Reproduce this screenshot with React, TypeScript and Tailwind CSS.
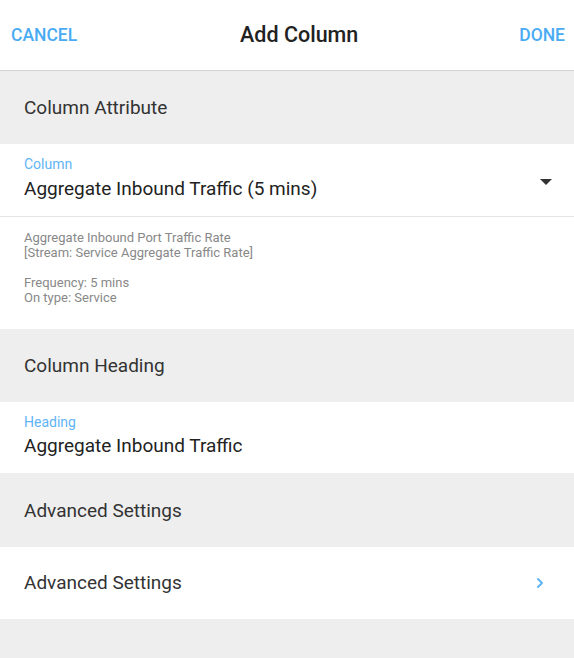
import { ChevronRight } from 'lucide-react';

export default function App() {
  return (
    <div className="w-[574px] h-[658px] bg-[#eeeeee] font-['Roboto',sans-serif] overflow-hidden">
      <div className="h-[71px] bg-white border-b border-[#d4d4d4] flex items-center justify-between pl-[11px] pr-[9px]">
        <button className="text-[17.5px] font-medium text-[#4aabf3]">CANCEL</button>
        <h1 className="text-[21.5px] font-medium text-[#222] ml-[2px]">Add Column</h1>
        <button className="text-[17.5px] font-medium text-[#4aabf3]">DONE</button>
      </div>

      <div className="h-[73px] flex items-center px-6 pt-[2px] text-[19px] text-[#333]">Column Attribute</div>

      <div className="bg-white">
        <div className="h-[73px] border-b border-[#e6e6e6] px-6 pt-[12px] relative">
          <div className="text-[14px] leading-[16px] text-[#5fb4f5]">Column</div>
          <div className="text-[19px] leading-[24px] text-[#222] mt-[5px]">Aggregate Inbound Traffic (5 mins)</div>
          <div className="absolute right-[22px] top-[35px] w-0 h-0 border-l-[6px] border-r-[6px] border-t-[6px] border-l-transparent border-r-transparent border-t-[#333]" />
        </div>
        <div className="h-[112px] px-6 pt-[13px] text-[13px] leading-[15px] text-[#888]">
          <div>Aggregate Inbound Port Traffic Rate</div>
          <div>[Stream: Service Aggregate Traffic Rate]</div>
          <div className="mt-[15px]">Frequency: 5 mins</div>
          <div>On type: Service</div>
        </div>
      </div>

      <div className="h-[73px] flex items-center px-6 pt-[2px] text-[19px] text-[#333]">Column Heading</div>

      <div className="h-[71px] bg-white px-6 pt-[12px]">
        <div className="text-[14px] leading-[16px] text-[#5fb4f5]">Heading</div>
        <div className="text-[19px] leading-[24px] text-[#222] mt-[4px]">Aggregate Inbound Traffic</div>
      </div>

      <div className="h-[74px] flex items-center px-6 pt-[2px] text-[19px] text-[#333]">Advanced Settings</div>

      <div className="h-[72px] bg-white flex items-center justify-between pl-6 pr-[26px] text-[19px] text-[#333]">
        <span>Advanced Settings</span>
        <ChevronRight size={16} strokeWidth={3} className="text-[#5fb4f5]" />
      </div>
    </div>
  );
}
